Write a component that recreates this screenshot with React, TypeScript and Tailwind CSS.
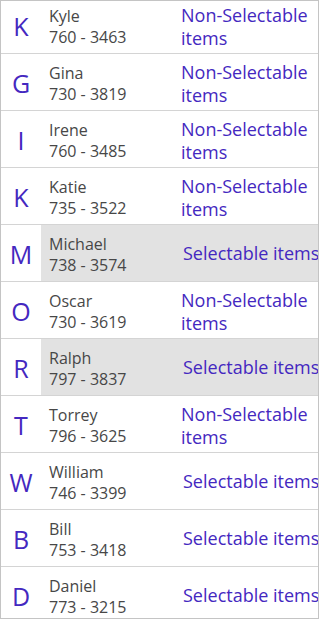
import React from "react";

type Contact = {
  letter: string;
  name: string;
  phone: string;
  selectable: boolean;
};

const contacts: Contact[] = [
  { letter: "K", name: "Kyle", phone: "760 - 3463", selectable: false },
  { letter: "G", name: "Gina", phone: "730 - 3819", selectable: false },
  { letter: "I", name: "Irene", phone: "760 - 3485", selectable: false },
  { letter: "K", name: "Katie", phone: "735 - 3522", selectable: false },
  { letter: "M", name: "Michael", phone: "738 - 3574", selectable: true },
  { letter: "O", name: "Oscar", phone: "730 - 3619", selectable: false },
  { letter: "R", name: "Ralph", phone: "797 - 3837", selectable: true },
  { letter: "T", name: "Torrey", phone: "796 - 3625", selectable: false },
  { letter: "W", name: "William", phone: "746 - 3399", selectable: true },
  { letter: "B", name: "Bill", phone: "753 - 3418", selectable: true },
  { letter: "D", name: "Daniel", phone: "773 - 3215", selectable: true },
];

// rows shown in the gray pressed state
const highlighted = new Set(["Michael", "Ralph"]);

function ContactRow({ c }: { c: Contact }) {
  const isOn = highlighted.has(c.name);
  return (
    <div className="flex h-[57px] shrink-0 border-b border-[#d4d4d4]">
      <div className="flex w-10 shrink-0 items-center justify-center bg-white pt-[2px] text-[25px] leading-none text-[#4428c0]">
        {c.letter}
      </div>
      <div className={`flex min-w-0 flex-1 items-center pt-[3px] ${isOn ? "bg-[#e2e2e2]" : "bg-white"}`}>
        <div className="flex w-[140px] shrink-0 flex-col pl-[8px] text-[16px] leading-[21px] text-[#474747]">
          <span>{c.name}</span>
          <span>{c.phone}</span>
        </div>
        {c.selectable ? (
          <div className="-mt-[3px] min-w-0 flex-1 overflow-hidden whitespace-nowrap pl-[2px] text-[18px] leading-[23px] text-[#4428c0]">
            Selectable items
          </div>
        ) : (
          <div className="min-w-0 flex-1 text-[18px] leading-[23px] text-[#4428c0]">
            Non-Selectable items
          </div>
        )}
      </div>
    </div>
  );
}

export default function App() {
  return (
    <div className="h-[621px] w-[321px] bg-white" style={{ fontFamily: '"Open Sans", "Noto Sans", sans-serif' }}>
      <div className="h-[619px] w-[319px] overflow-hidden border border-[#c4c4c4]">
        <div className="-mt-[4px] flex flex-col">
          {contacts.map((c, i) => (
            <ContactRow key={i} c={c} />
          ))}
        </div>
      </div>
    </div>
  );
}
